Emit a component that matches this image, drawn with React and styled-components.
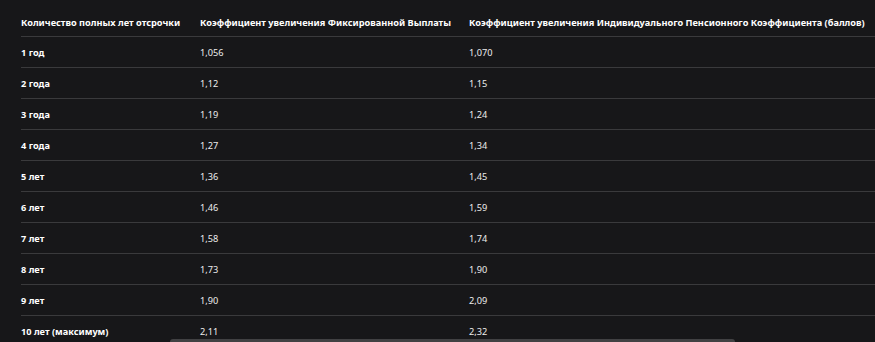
import React from "react";
import styled, { createGlobalStyle } from "styled-components";

const GlobalStyle = createGlobalStyle`
  html, body {
    margin: 0;
    padding: 0;
    background: #171719;
    overflow: hidden;
  }
`;

const Page = styled.div`
  position: relative;
  width: 875px;
  height: 342px;
  overflow: hidden;
  background: #171719;
  font-family: "Noto Sans", "Open Sans", sans-serif;
`;

const Wrap = styled.div`
  padding: 0 0 0 21px;
`;

const Table = styled.table`
  border-collapse: collapse;
  width: 1000px;
  table-layout: fixed;
`;

const Head = styled.th`
  text-align: left;
  font-size: 9.2px;
  font-weight: 700;
  color: #ffffff;
  padding: 17px 0 8px 0;
  line-height: 11px;
  width: ${(p) => p.w}px;
  border-bottom: 1px solid #3a3a3c;
  white-space: nowrap;
`;

const Cell = styled.td`
  font-size: 9.2px;
  font-weight: ${(p) => (p.bold ? 700 : 400)};
  color: ${(p) => (p.bold ? "#ffffff" : "#ececec")};
  padding: 10px 0 9px 0;
  line-height: 11px;
  border-bottom: 1px solid #3a3a3c;
  white-space: nowrap;
`;

const Thumb = styled.div`
  position: absolute;
  left: 170px;
  width: 565px;
  bottom: -3px;
  height: 6px;
  border-radius: 3px;
  background: #414143;
`;

const rows = [
  ["1 год", "1,056", "1,070"],
  ["2 года", "1,12", "1,15"],
  ["3 года", "1,19", "1,24"],
  ["4 года", "1,27", "1,34"],
  ["5 лет", "1,36", "1,45"],
  ["6 лет", "1,46", "1,59"],
  ["7 лет", "1,58", "1,74"],
  ["8 лет", "1,73", "1,90"],
  ["9 лет", "1,90", "2,09"],
  ["10 лет (максимум)", "2,11", "2,32"],
];

export default function App() {
  return (
    <Page>
      <GlobalStyle />
      <Wrap>
        <Table>
          <thead>
            <tr>
              <Head w={179}>Количество полных лет отсрочки</Head>
              <Head w={269}>Коэффициент увеличения Фиксированной Выплаты</Head>
              <Head w={552}>
                Коэффициент увеличения Индивидуального Пенсионного Коэффициента (баллов)
              </Head>
            </tr>
          </thead>
          <tbody>
            {rows.map((r) => (
              <tr key={r[0]}>
                <Cell bold>{r[0]}</Cell>
                <Cell>{r[1]}</Cell>
                <Cell>{r[2]}</Cell>
              </tr>
            ))}
          </tbody>
        </Table>
      </Wrap>
      <Thumb />
    </Page>
  );
}
